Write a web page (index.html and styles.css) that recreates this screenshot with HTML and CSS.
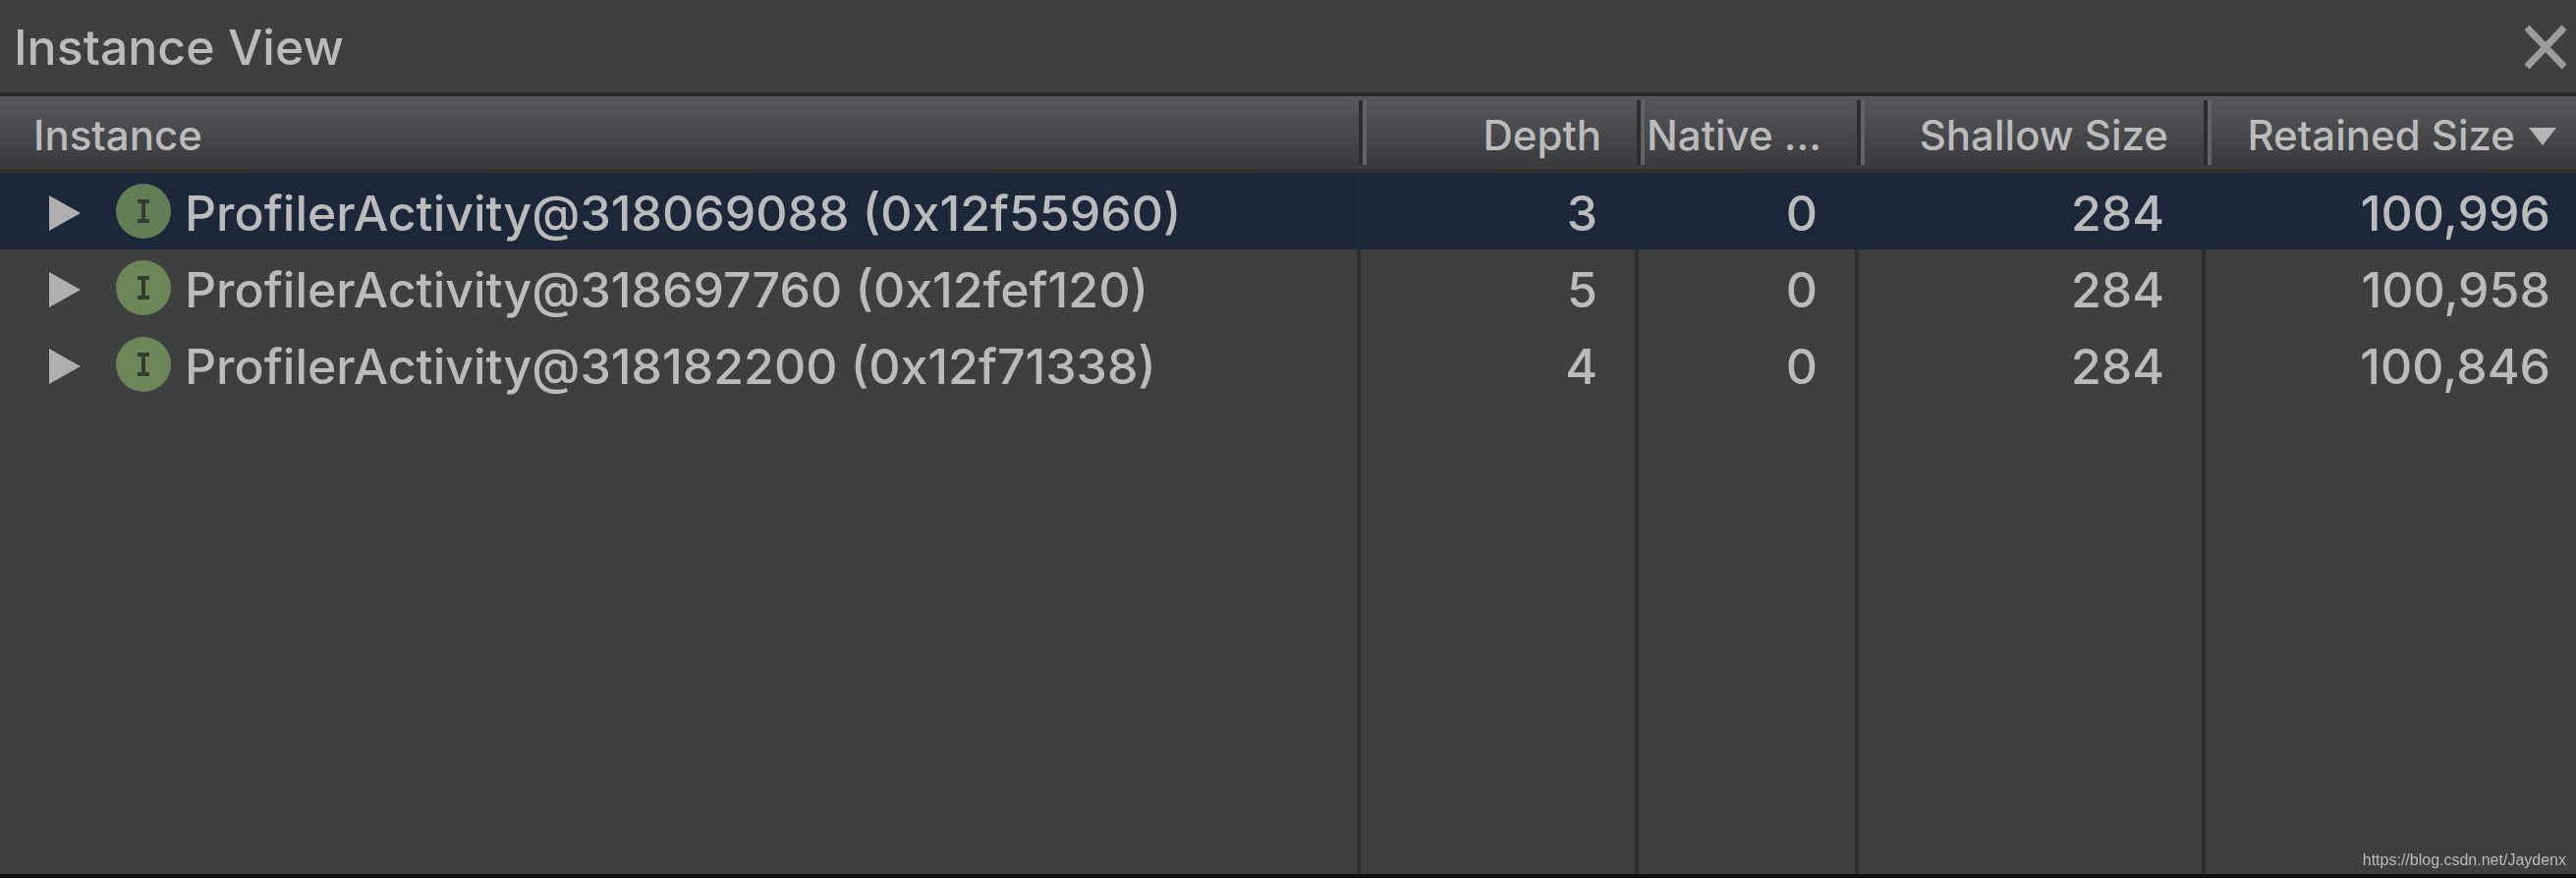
FILE: index.html
```html
<!DOCTYPE html>
<html lang="en">
<head>
    <meta charset="UTF-8">
    <title>Instance View</title>
    <link rel="stylesheet" href="styles.css">
</head>
<body>

    <header class="title-bar">
        <h1>Instance View</h1>
        <button class="close" aria-label="Close">
            <svg width="46" height="46" viewBox="0 0 46 46"><path d="M4 3L42 43M42 3L4 43" stroke="#9c9c9c" stroke-width="7"/></svg>
        </button>
    </header>

    <main>
        <table>
            <colgroup>
                <col>
                <col class="col-depth">
                <col class="col-native">
                <col class="col-shallow">
                <col class="col-retained">
            </colgroup>
            <thead>
                <tr>
                    <th><button>Instance</button></th>
                    <th><button>Depth</button></th>
                    <th><button>Native ...</button></th>
                    <th><button>Shallow Size</button></th>
                    <th aria-sort="descending"><button>Retained Size<svg class="sort" width="28" height="18" viewBox="0 0 28 18"><path d="M0 0H28L14 18Z" fill="#b4b4b4"/></svg></button></th>
                </tr>
            </thead>
            <tbody>
                <tr class="selected">
                    <td>
                        <div class="instance">
                            <button class="expand" aria-label="Expand"><svg width="32" height="36" viewBox="0 0 32 36"><path d="M0 0L32 18L0 36Z" fill="#afafaf"/></svg></button>
                            <svg class="icon" width="56" height="56" viewBox="0 0 56 56"><circle cx="28" cy="28" r="28"/><path d="M22 16H34V20H30V36H34V40H22V36H26V20H22Z" fill="#343b30"/></svg>
                            <span>ProfilerActivity@318069088 (0x12f55960)</span>
                        </div>
                    </td>
                    <td>3</td>
                    <td>0</td>
                    <td>284</td>
                    <td>100,996</td>
                </tr>
                <tr>
                    <td>
                        <div class="instance">
                            <button class="expand" aria-label="Expand"><svg width="32" height="36" viewBox="0 0 32 36"><path d="M0 0L32 18L0 36Z" fill="#afafaf"/></svg></button>
                            <svg class="icon" width="56" height="56" viewBox="0 0 56 56"><circle cx="28" cy="28" r="28"/><path d="M22 16H34V20H30V36H34V40H22V36H26V20H22Z" fill="#343b30"/></svg>
                            <span>ProfilerActivity@318697760 (0x12fef120)</span>
                        </div>
                    </td>
                    <td>5</td>
                    <td>0</td>
                    <td>284</td>
                    <td>100,958</td>
                </tr>
                <tr>
                    <td>
                        <div class="instance">
                            <button class="expand" aria-label="Expand"><svg width="32" height="36" viewBox="0 0 32 36"><path d="M0 0L32 18L0 36Z" fill="#afafaf"/></svg></button>
                            <svg class="icon" width="56" height="56" viewBox="0 0 56 56"><circle cx="28" cy="28" r="28"/><path d="M22 16H34V20H30V36H34V40H22V36H26V20H22Z" fill="#343b30"/></svg>
                            <span>ProfilerActivity@318182200 (0x12f71338)</span>
                        </div>
                    </td>
                    <td>4</td>
                    <td>0</td>
                    <td>284</td>
                    <td>100,846</td>
                </tr>
                <!-- empty space under the rows, keeps the column lines going -->
                <tr class="filler">
                    <td></td>
                    <td></td>
                    <td></td>
                    <td></td>
                    <td></td>
                </tr>
            </tbody>
        </table>
    </main>

    <a class="watermark" href="https://blog.csdn.net/Jaydenx">https://blog.csdn.net/Jaydenx</a>

</body>
</html>
```
FILE: styles.css
```css
* {
    box-sizing: border-box;
}
body {
    display: flex;
    flex-direction: column;
    height: 100vh;
    margin: 0;
    border-bottom: 4px solid #111;
    background: #3e3f41;
    color: #bbb;
    font-family: Inter, sans-serif;
    font-size: 50px;
    font-weight: 500;
}
button {
    padding: 0;
    border: none;
    background: none;
    color: inherit;
    font: inherit;
    cursor: pointer;
}
svg {
    display: block;
}
.title-bar {
    display: flex;
    align-items: center;
    justify-content: space-between;
    height: 98px;
    padding: 2px 8px 0 14px;
    border-bottom: 4px solid #292a2b;
}
h1 {
    margin: 0;
    font-size: 50px;
    font-weight: 500;
}
main {
    flex: 1;
}
table {
    width: 100%;
    height: 100%;
    table-layout: fixed;
    border-collapse: separate;
    border-spacing: 0;
}
.col-depth {
    width: 283px;
}
.col-native {
    width: 224px;
}
.col-shallow {
    width: 353px;
}
.col-retained {
    width: 377px;
}
thead tr {
    background: linear-gradient(#57585c, #37383a);
}
th {
    position: relative;
    height: 78px;
    padding: 4px 38px 0 8px;
    border-bottom: 4px solid #2e2f30;
    font-size: 42px;
    font-weight: 500;
    text-align: right;
    white-space: nowrap;
}
th:first-child {
    padding-left: 34px;
    text-align: left;
}
th:last-child {
    padding-right: 20px;
}
th button {
    display: inline-flex;
    align-items: center;
    gap: 14px;
}
/* groove between two headers */
th + th::before {
    content: "";
    position: absolute;
    top: 4px;
    bottom: 4px;
    left: -2px;
    border-left: 4px solid #2b2c2e;
    border-right: 4px solid #626366;
}
td {
    height: 78px;
    padding: 4px 38px 0 0;
    border-right: 4px solid #2d2e2f;
    line-height: 74px;
    text-align: right;
}
td:first-child {
    padding: 0;
}
td:last-child {
    padding-right: 26px;
    border-right: none;
}
.selected td {
    background: #1c2839;
    border-color: #1d2b39;
}
.filler td {
    height: auto;
}
.instance {
    display: flex;
    align-items: center;
    height: 78px;
    padding-left: 50px;
    white-space: nowrap;
}
.instance span {
    padding-top: 4px;
}
.expand {
    margin: 4px 36px 0 0;
}
.icon {
    margin-right: 14px;
    fill: #6c8658;
}
.selected .icon {
    fill: #617e57;
}
.sort {
    margin-top: 4px;
}
.watermark {
    position: fixed;
    right: 10px;
    bottom: 8px;
    color: #bbb;
    font-family: "Liberation Sans", Arial, sans-serif;
    font-size: 16px;
    font-weight: 400;
    line-height: 20px;
    text-decoration: none;
}
```
